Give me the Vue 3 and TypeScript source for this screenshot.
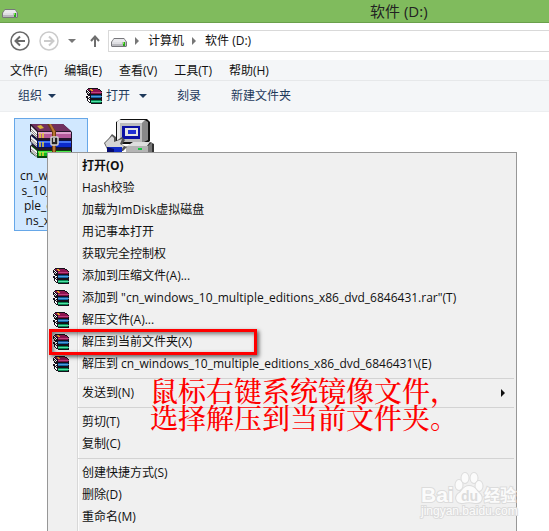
<script setup lang="ts">
import { h, ref } from 'vue'
import type { FunctionalComponent } from 'vue'

interface MenuEntry {
  label?: string
  archive?: boolean
  bold?: boolean
  submenu?: boolean
  separator?: boolean
}

const menuBar: string[] = ['文件(F)', '编辑(E)', '查看(V)', '工具(T)', '帮助(H)']
const address = ref<string[]>(['计算机', '软件 (D:)'])
const fileLines: string[] = ['cn_window', 's_10_multi', 'ple_editio', 'ns_x86_d']

const entries: MenuEntry[] = [
  { label: '打开(O)', bold: true },
  { label: 'Hash校验' },
  { label: '加载为ImDisk虚拟磁盘' },
  { label: '用记事本打开' },
  { label: '获取完全控制权' },
  { label: '添加到压缩文件(A)...', archive: true },
  { label: '添加到 "cn_windows_10_multiple_editions_x86_dvd_6846431.rar"(T)', archive: true },
  { label: '解压文件(A)...', archive: true },
  { label: '解压到当前文件夹(X)', archive: true },
  { label: '解压到 cn_windows_10_multiple_editions_x86_dvd_6846431\\(E)', archive: true },
  { separator: true },
  { label: '发送到(N)', submenu: true },
  { separator: true },
  { label: '剪切(T)' },
  { label: '复制(C)' },
  { separator: true },
  { label: '创建快捷方式(S)' },
  { label: '删除(D)' },
  { label: '重命名(M)' },
  { separator: true },
]

const shape = (d: string, fill: string) => h('path', { d, fill })

const BooksIcon: FunctionalComponent = () =>
  h('svg', { width: 17, height: 17, viewBox: '0 0 17 17', 'shape-rendering': 'crispEdges', 'aria-hidden': 'true' }, [
    shape('M2 0H12V1H14V2H15V3H16V16H5V15H3V14H2V13H1V10H0V8H1V5H0V2H1V1H2Z', '#14101a'),
    shape('M2 1H12V2H14V3H15V4H5V3H3V2H2Z', '#8d1450'),
    shape('M5 4H16V5H5Z', '#c2407f'),
    shape('M5 5H15V6H5Z', '#7a0f44'),
    shape('M4 1H6V2H7V3H5V2H4Z', '#e8b020'),
    shape('M1 2H2V3H3V4H4V5H3V4H2V3H1Z', '#fff'),
    shape('M1 4H2V5H3V6H2V5H1Z', '#ddd'),
    shape('M5 7H15V8H5Z', '#0d4f93'),
    shape('M5 8H16V9H5Z', '#4f9fd8'),
    shape('M5 9H15V10H5Z', '#1266a8'),
    shape('M1 7H2V8H4V9H2V8H1Z', '#fff'),
    shape('M2 9H3V10H4V11H3V10H2Z', '#ddd'),
    shape('M5 12H15V13H5Z', '#078951'),
    shape('M5 13H16V14H5Z', '#4fe0a8'),
    shape('M5 14H15V15H5Z', '#078951'),
    shape('M2 11H3V12H4V14H3V13H2Z', '#fff'),
  ])

const DriveIcon: FunctionalComponent = () =>
  h('svg', { width: 16, height: 10, viewBox: '0 0 16 10', 'aria-hidden': 'true' }, [
    shape('M3 0H13L16 4V8L15 9H1L0 8V4Z', '#77777b'),
    shape('M3 1H13L15 4H1Z', '#e9e9ec'),
    shape('M1 4H15V8H1Z', '#b9b9be'),
    shape('M1 4H11V6H1Z', '#dedee2'),
    shape('M12 4H14V8H12Z', '#29a718'),
    shape('M12 4H13V6H12Z', '#7af24c'),
  ])
</script>

<template>
  <main class="window">
    <header class="titlebar">
      <DriveIcon />
      <h1>软件 (D:)</h1>
    </header>

    <nav class="address-row" aria-label="导航">
      <button class="round" aria-label="后退">
        <svg width="20" height="20" viewBox="0 0 20 20" fill="none" stroke="#6a6a6a">
          <circle cx="10" cy="10" r="9" stroke-width="1.5" />
          <path d="M15 10H6M10 5.5L5.5 10L10 14.5" stroke-width="2" />
        </svg>
      </button>
      <button class="round" aria-label="前进">
        <svg width="20" height="20" viewBox="0 0 20 20" fill="none" stroke="#cbcbcb">
          <circle cx="10" cy="10" r="9" stroke-width="1.5" />
          <path d="M5 10H14M10 5.5L14.5 10L10 14.5" stroke-width="2" />
        </svg>
      </button>
      <button class="recent" aria-label="最近位置">
        <svg width="8" height="4" viewBox="0 0 8 4"><path d="M0 0H8L4 4Z" fill="#777" /></svg>
      </button>
      <button class="up" aria-label="向上">
        <svg width="10" height="12" viewBox="0 0 10 12" fill="none" stroke="#6e6e6e" stroke-width="2">
          <path d="M5 12V2M1 6L5 1.5L9 6" />
        </svg>
      </button>
      <div class="address">
        <DriveIcon />
        <template v-for="part in address" :key="part">
          <svg class="chevron" width="4" height="8" viewBox="0 0 4 8"><path d="M0 0L4 4L0 8Z" fill="#777" /></svg>
          <button>{{ part }}</button>
        </template>
      </div>
    </nav>

    <div class="menubar">
      <button v-for="item in menuBar" :key="item">{{ item }}</button>
    </div>

    <div class="toolbar">
      <button>组织<span class="caret"></span></button>
      <button class="open"><BooksIcon />打开<span class="caret"></span></button>
      <button>刻录</button>
      <button>新建文件夹</button>
    </div>

    <section class="files">
      <button class="file selected">
        <svg width="44" height="36" viewBox="0 0 44 36" aria-hidden="true">
          <path d="M1 1H34L43 9V35H9L1 29V23L3 21L1 18V13L3 11L1 8Z" fill="#24162a" />
          <path d="M2 1H34L42 8H9Z" fill="#70305f" />
          <path d="M9 9H42V15H9Z" fill="#b65b9b" />
          <path d="M9 9H42V11H9Z" fill="#dda0cb" />
          <path d="M2 3L8 9V15L2 10Z" fill="#f4f4f4" />
          <path d="M2 6L8 12M2 8L8 14" stroke="#8c8c8c" />
          <path d="M3 12L9 17H42V25H9L2 20Z" fill="#09134d" />
          <path d="M9 18H42V24H9Z" fill="#0b2acc" />
          <path d="M9 18H42V20H9Z" fill="#4675f5" />
          <path d="M2 13L8 18V24L2 19Z" fill="#f4f4f4" />
          <path d="M2 16L8 21M2 18L8 23" stroke="#8c8c8c" />
          <path d="M3 22L9 27H42V35H9L2 30Z" fill="#07450b" />
          <path d="M9 28H42V33H9Z" fill="#11b622" />
          <path d="M9 28H42V30H9Z" fill="#50e94c" />
          <path d="M2 23L8 28V34L2 29Z" fill="#f4f4f4" />
          <path d="M2 26L8 31M2 28L8 33" stroke="#8c8c8c" />
          <path d="M11 10V15M14 10V15M11 19V24M14 19V24M11 29V33M14 29V33" stroke="#e9d237" stroke-width="1.5" />
          <path d="M8 3L12 2L15 5L11 6Z" fill="#d8b737" />
          <path d="M18 1H22L27 8V35H23V9Z" fill="#6e3d12" />
          <path d="M20 1H22L26 8V35H24V9Z" fill="#b87632" />
          <rect x="22" y="14" width="7" height="8" rx="1" fill="#222" stroke="#d5d5d5" stroke-width="1.5" />
          <path d="M25 15V19" stroke="#eee" stroke-width="1.5" />
        </svg>
        <span class="name"><span v-for="line in fileLines" :key="line">{{ line }}</span></span>
      </button>
      <button class="file" aria-label="安装程序">
        <svg width="50" height="44" viewBox="0 0 50 44" aria-hidden="true">
          <path d="M17 0H43L46 3V22L42 25H15L12 23V3Z" fill="#111" />
          <path d="M15 1H41V20L38 23H13V3Z" fill="#bcbcbc" />
          <path d="M15 1H41L38 4H16V22H13V3Z" fill="#ececec" />
          <path d="M41 1L44 3V21L40 23H38V4Z" fill="#888" />
          <path d="M18 7H36V20H18Z" fill="#0b10a4" />
          <path d="M21 9H34V17H21Z" fill="#e4e4e4" />
          <path d="M24 11H32V15H24Z" fill="#2030d4" />
          <path d="M23 28L29 23H46L50 25V44H20Z" fill="#333" />
          <path d="M23 27L29 23H46L43 27Z" fill="#dedede" />
          <path d="M22 27H44V43H22Z" fill="#b4b4b4" />
          <path d="M44 27L48 23V40L44 44Z" fill="#777" />
          <path d="M34 29H38V31H34Z" fill="#13c83d" />
          <path d="M0 24L5 19L8 15L12 18V22L18 18L21 21L18 26L23 28L19 32H4Z" fill="#555" />
          <path d="M1 24L6 19L8 17L10 19V23L18 20L16 25L20 27L17 31H4Z" fill="#d5d5d5" />
          <path d="M3 28H18V44H3Z" fill="#102ac5" />
          <path d="M3 28L10 30V44H3Z" fill="#060b70" />
        </svg>
      </button>
    </section>

    <div class="context" role="menu">
      <template v-for="(entry, index) in entries" :key="index">
        <hr v-if="entry.separator" />
        <button v-else role="menuitem" :class="{ bold: entry.bold }">
          <span class="gutter"><BooksIcon v-if="entry.archive" /></span>
          <span class="label">{{ entry.label }}</span>
          <svg v-if="entry.submenu" class="more" width="4" height="8" viewBox="0 0 4 8"><path d="M0 0L4 4L0 8Z" fill="#111" /></svg>
        </button>
      </template>
    </div>

    <div class="highlight"></div>
    <p class="note">鼠标右键系统镜像文件，<br />选择解压到当前文件夹。</p>

    <div class="watermark">
      <svg width="104" height="60" viewBox="0 0 104 60" fill="#fbfbfb" stroke="#dcdcdc">
        <g stroke-width="2" paint-order="stroke">
          <text class="brand" x="4" y="42">Bai</text>
          <ellipse cx="42" cy="25" rx="3.5" ry="5" />
          <ellipse cx="48" cy="18" rx="3.5" ry="5" />
          <ellipse cx="57" cy="18" rx="3.5" ry="5" />
          <ellipse cx="62" cy="26" rx="3.5" ry="5" />
          <path d="M52 26C46 26 45 32 41 34C37 38 40 44 46 43C50 42 54 42 58 43C65 44 67 37 62 33C59 30 58 26 52 26Z" />
          <text class="brand-cn" x="67" y="41">经验</text>
          <text class="url" x="4" y="55">jingyan.baidu.com</text>
        </g>
        <text class="du" x="44" y="41">du</text>
      </svg>
    </div>
  </main>
</template>

<style>
body {
  margin: 0;
}
</style>

<style scoped>
.window {
  position: relative;
  height: 100vh;
  overflow: hidden;
  display: flex;
  flex-direction: column;
  background: #fff;
  color: #111;
  font: 12px/16px "Open Sans", "Noto Sans CJK SC", sans-serif;
}

button {
  display: flex;
  align-items: center;
  padding: 0;
  border: 0;
  background: none;
  color: inherit;
  font: inherit;
  white-space: nowrap;
}

svg {
  flex: none;
}

.titlebar {
  box-sizing: border-box;
  height: 23px;
  flex: none;
  display: flex;
  align-items: center;
  gap: 352px;
  padding-left: 2px;
  border-bottom: 1px solid #6aa04b;
  background: #80bb5d;
}

.titlebar svg {
  margin-top: 6px;
}

.titlebar h1 {
  margin: 0;
  font-size: 15px;
  line-height: 22px;
  font-weight: 400;
  color: #222;
  white-space: nowrap;
}

.address-row {
  flex: none;
  box-sizing: border-box;
  height: 37px;
  display: flex;
  align-items: center;
  padding: 0 0 2px 10px;
}

.round {
  margin-right: 9px;
}

.recent {
  margin-right: 14px;
}

.up {
  margin-right: 8px;
}

.address {
  flex: 1;
  display: flex;
  align-items: center;
  height: 20px;
  padding-left: 2px;
  border: 1px solid #d9d9d9;
  border-right: 0;
}

.address > svg:first-child {
  margin-top: 4px;
}

.chevron {
  margin: 0 9px 0 8px;
}

.menubar {
  flex: none;
  box-sizing: border-box;
  display: flex;
  align-items: center;
  gap: 17px;
  height: 21px;
  padding: 2px 10px 0;
  background: #f4f6f8;
  border-bottom: 1px solid #e6e8ea;
}

.toolbar {
  flex: none;
  box-sizing: border-box;
  height: 31px;
  display: flex;
  align-items: center;
  gap: 30px;
  padding-left: 18px;
  background: #f4f6f8;
  border-bottom: 1px solid #eceef0;
  color: #1e395b;
}

.caret {
  border: 4px solid transparent;
  border-top-color: #1e395b;
  border-bottom: 0;
  margin-left: 6px;
}

.open {
  gap: 3px;
}

.files {
  flex: 1;
  display: flex;
  align-items: flex-start;
  gap: 16px;
  padding: 6px 14px;
}

.file {
  flex-direction: column;
  box-sizing: border-box;
  padding-top: 1px;
}

.selected {
  width: 74px;
  height: 113px;
  padding-top: 4px;
  gap: 9px;
  border: 1px solid #66a7e8;
  background: #d1e8ff;
}

.name {
  display: flex;
  flex-direction: column;
  align-items: center;
  line-height: 15px;
}

.context {
  position: absolute;
  top: 152px;
  left: 47px;
  width: 468px;
  padding: 2px 0;
  border: 1px solid #979797;
  background: linear-gradient(90deg, transparent 29px, #d8d8d8 29px, #d8d8d8 30px, #fbfbfb 30px, #fbfbfb 31px, transparent 31px) #f0f0f0;
}

.context button {
  width: 100%;
  height: 22px;
}

.context hr {
  height: 1px;
  margin: 3px 2px 3px 30px;
  border: 0;
  background: #d3d3d3;
}

.gutter {
  display: flex;
  width: 29px;
  padding-left: 5px;
  box-sizing: border-box;
  margin-right: 5px;
}

.more {
  margin-left: auto;
  margin-right: 11px;
}

.bold {
  font-weight: 700;
}

.highlight {
  position: absolute;
  top: 329px;
  left: 49px;
  width: 202px;
  height: 20px;
  border: 3px solid #f00;
  box-shadow: 2px 2px 4px rgba(0, 0, 0, 0.6), inset 2px 2px 4px rgba(0, 0, 0, 0.5);
}

.note {
  position: absolute;
  top: 377px;
  left: 150px;
  margin: 0;
  color: #f00;
  font: 500 28px/27px "Noto Serif CJK SC", "Noto Sans CJK SC", serif;
  white-space: nowrap;
}

.watermark {
  position: absolute;
  top: 460px;
  left: 417px;
}

.brand {
  font: 700 21px "Liberation Sans", sans-serif;
}

.brand-cn {
  font: 700 16px "Noto Sans CJK SC", sans-serif;
}

.url {
  font: 12px "Liberation Sans", sans-serif;
}

.du {
  font: 700 14px "Liberation Sans", sans-serif;
  fill: #dcdcdc;
  stroke: none;
}
</style>
